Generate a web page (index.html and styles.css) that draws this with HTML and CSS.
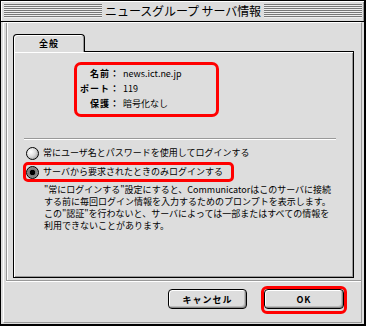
FILE: index.html
```html
<!DOCTYPE html>
<html lang="ja">
<head>
  <meta charset="UTF-8" />
  <title>ニュースグループ サーバ情報</title>
  <link rel="stylesheet" href="styles.css">
</head>
<body>
  <div class="window">
    <div class="titlebar">
      <span class="stripes"></span>
      <span class="title">ニュースグループ サーバ情報</span>
      <span class="stripes"></span>
    </div>
    <div class="main">
      <div class="frame">
        <div class="group">
          <div class="tab">全般</div>
          <div class="panel">
            <div class="info">
              <span class="label">名前：</span><span class="value">news.ict.ne.jp</span>
              <span class="label">ポート：</span><span class="value">119</span>
              <span class="label">保護：</span><span class="value">暗号化なし</span>
            </div>
            <div class="separator"></div>
            <div class="option"><span class="radio"></span>常にユーザ名とパスワードを使用してログインする</div>
            <div class="option selected"><span class="radio on"></span>サーバから要求されたときのみログインする</div>
            <p class="note">"常にログインする"設定にすると、Communicatorはこのサーバに接続<br>する前に毎回ログイン情報を入力するためのプロンプトを表示します。<br>この"認証"を行わないと、サーバによっては一部またはすべての情報を<br>利用できないことがあります。</p>
          </div>
        </div>
        <div class="buttons">
          <button class="btn cancel">キャンセル</button>
          <div class="ok-ring"><button class="btn ok">OK</button></div>
        </div>
      </div>
    </div>
  </div>
</body>
</html>
```

FILE: styles.css
```css
* { margin: 0; padding: 0; box-sizing: border-box; }
body { background: #ddd; font-family: "Noto Sans CJK JP", "Noto Sans", sans-serif; font-size: 9px; color: #000; }

.window { width: 366px; height: 326px; background: #ddd; border: solid #000; border-width: 1px 2px 2px 1px;
  display: flex; flex-direction: column;
}
.titlebar { height: 21px; border-bottom: 1px solid #000; display: flex; align-items: center; gap: 2px;
  padding: 0 2px 0 3px; box-shadow: inset 1px 1px #fff, inset -1px 0 #999;
}
.stripes { flex: 1; height: 14px; background: repeating-linear-gradient(#777 0 1px, #eee 1px 2px); }
.title { font-size: 12px; line-height: 14px; padding: 0 1px; letter-spacing: -0.1px; }

.main { flex: 1; padding: 0 2px 1px 2px; }
.frame { height: 100%; border: 1px solid; border-color: #fff #999 #999 #fff; display: flex; flex-direction: column; }
.group { margin-left: 2px; border-left: 1px solid #999; border-bottom: 1px solid #999;
  box-shadow: inset 1px 0 #fff, 0 1px #fff; padding: 11px 0 2px 6px;
}
.tab { position: relative; z-index: 1; width: 72px; height: 18px; margin-bottom: -1px;
  border: 1px solid #000; border-bottom: 0; border-radius: 4px 4px 0 0; background: #ddd;
  box-shadow: inset 1px 1px #fff, inset -1px 0 #999;
  font-weight: bold; letter-spacing: 1px; text-align: center; line-height: 18px;
}
.panel { width: 341px; height: 227px; border: 1px solid #000; background: #ddd;
  box-shadow: inset 1px 1px #fff, inset -1px -1px #999;
}

.info { width: 145px; height: 55px; margin: 10px 0 0 60px; border: 3px solid #f00; border-radius: 7px;
  display: grid; grid-template-columns: 43px auto; column-gap: 3px; align-content: start;
  padding-top: 1px; line-height: 15px;
}
.label { text-align: right; font-weight: bold; letter-spacing: 1px; }

.separator { margin: 21px 0 0 10px; width: 312px; height: 2px; border-top: 1px solid #999; border-bottom: 1px solid #fff; }

.option { display: flex; align-items: center; gap: 4px; width: 211px; height: 20px; margin: 3px 0 0 9px;
  border: 3px solid transparent; border-radius: 5px; line-height: 14px; white-space: nowrap;
}
.option.selected { border-color: #f00; margin-top: -1px; }
.radio { width: 13px; height: 13px; border-radius: 50%; border: 1px solid #000; flex: none;
  background: radial-gradient(circle at 35% 35%, #fff 0, #ddd 45%, #888 100%);
}
.radio.on { background: radial-gradient(circle, #000 0 2.5px, #777 3px, #aaa 100%); }

.note { margin: 2px 0 0 30px; line-height: 12px; white-space: nowrap; }

.buttons { display: flex; justify-content: flex-end; align-items: flex-start; gap: 14px; padding: 5px 14px 0 0; }
.btn { font: inherit; font-weight: bold; letter-spacing: 1px; color: #000; height: 20px; background: #ddd;
  border: 1px solid #000; border-radius: 4px;
  box-shadow: inset 1px 1px #fff, inset -1px -1px #888, inset -2px -2px #bbb;
}
.cancel { width: 79px; margin-top: 3px; }
.ok-ring { border: 3px solid #f00; border-radius: 6px; padding-bottom: 2px; }
.ok { display: block; width: 80px; }
```
